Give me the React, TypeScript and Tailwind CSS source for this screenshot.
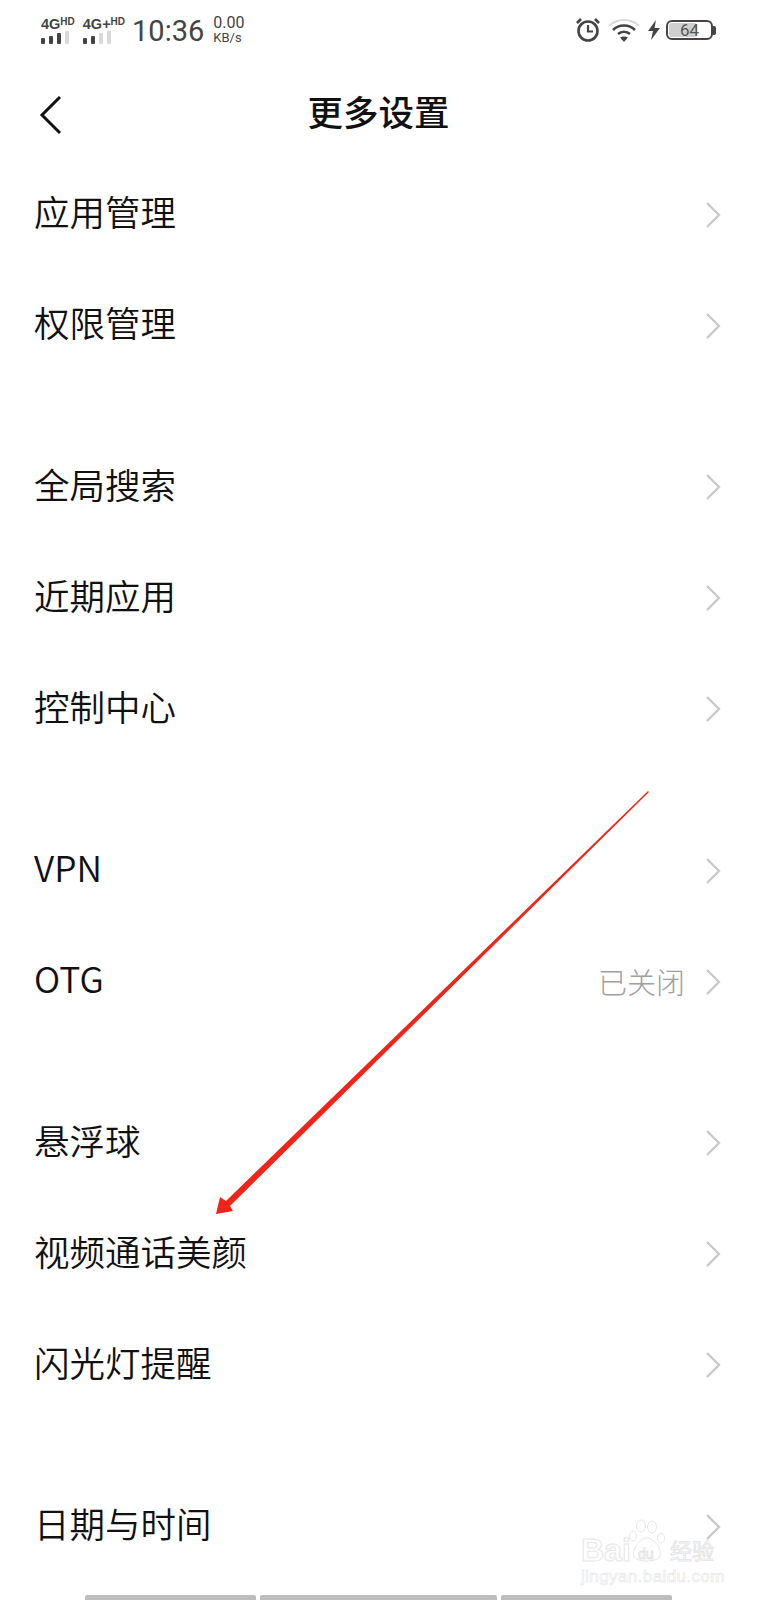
const CJK = 'font-["Noto_Sans_CJK_SC","Noto_Sans",sans-serif]';

type Item = { label: string; value?: string };

const groups: Item[][] = [
  [{ label: '应用管理' }, { label: '权限管理' }],
  [{ label: '全局搜索' }, { label: '近期应用' }, { label: '控制中心' }],
  [{ label: 'VPN' }, { label: 'OTG', value: '已关闭' }],
  [{ label: '悬浮球' }, { label: '视频通话美颜' }, { label: '闪光灯提醒' }],
  [{ label: '日期与时间' }],
];

const Chevron = () => (
  <svg width="16" height="28" viewBox="0 0 16 28" fill="none" className="shrink-0">
    <path d="M2 2l12 12L2 26" stroke="#c9c9c9" strokeWidth="2.4" />
  </svg>
);

const Signal = ({ lit }: { lit: number }) => (
  <div className="flex items-end gap-[4px] h-[13px]">
    {[6, 8, 11, 13].map((h, i) => (
      <div
        key={h}
        className={i < lit ? 'w-[4px] rounded-[1px] bg-[#444444]' : 'w-[4px] rounded-[1px] bg-[#d9d9d9]'}
        style={{ height: h }}
      />
    ))}
  </div>
);

const Network = ({ name, lit }: { name: string; lit: number }) => (
  <div className="flex flex-col gap-[2px]">
    <div className="flex items-start h-[12px] font-['Liberation_Sans',sans-serif] font-bold text-[#444444] leading-none">
      <span className="text-[14.5px]">{name}</span>
      <span className="text-[10px]">HD</span>
    </div>
    <Signal lit={lit} />
  </div>
);

const StatusBar = () => (
  <div className="flex items-center justify-between h-[60px] pl-[41px] pr-[41px] text-[#444444]">
    <div className="flex items-center">
      <div className="flex gap-[8px] pt-[1px]">
        <Network name="4G" lit={3} />
        <Network name="4G+" lit={2} />
      </div>
      <span className="ml-[7px] mt-[2px] text-[29px] leading-none font-['Roboto',sans-serif]">10:36</span>
      <div className="ml-[9px] flex flex-col font-['Roboto',sans-serif]">
        <span className="text-[16px] leading-[15px]">0.00</span>
        <span className="text-[13px] leading-[15px]">KB/s</span>
      </div>
    </div>
    <div className="flex items-center">
      <svg width="26" height="26" viewBox="0 0 26 26" fill="none" stroke="#444444">
        <circle cx="13" cy="14" r="9.5" strokeWidth="2.6" />
        <path d="M13 8v6.5h5" strokeWidth="2.2" />
        <path d="M2 6l4-4M24 6l-4-4" strokeWidth="2.6" />
      </svg>
      <svg width="32" height="24" viewBox="0 0 32 24" fill="none" className="ml-[7px]">
        <path d="M1 8C9 0 23 0 31 8" stroke="#d8d8d8" strokeWidth="2" />
        <path d="M5 12c6-6 16-6 22 0" stroke="#444444" strokeWidth="2.6" />
        <path d="M10 16c3.500-3 8.500-3 12 0" stroke="#444444" strokeWidth="2.6" />
        <path d="M12 19.500c2.500-1.500 5.500-1.500 8 0L16 24z" fill="#444444" />
      </svg>
      <svg width="12" height="20" viewBox="0 0 12 20" className="ml-[8px]">
        <path d="M8 0L0 11h5l-2 9 9-12H6.500z" fill="#444444" />
      </svg>
      <div className="ml-[6px] relative flex items-center justify-center w-[47px] h-[20px] rounded-[6px] border-2 border-[#444444] overflow-hidden">
        <div className="absolute left-[1px] top-[1px] bottom-[1px] w-[28px] rounded-[3px] bg-[#cfcfcf]" />
        <span className="relative text-[17px] leading-none font-['Roboto',sans-serif] text-[#555555]">64</span>
      </div>
      <div className="w-[3px] h-[9px] rounded-r-[2px] bg-[#444444]" />
    </div>
  </div>
);

const Row = ({ label, value }: Item) => (
  <div className="flex items-center justify-between h-[111px] pl-[34px] pr-[36px]">
    <span className="-mt-[7px] text-[35.5px] leading-none font-[350] text-[#111111]">{label}</span>
    <div className="flex items-center gap-[20px]">
      {value && <span className="-mt-[1px] text-[29px] leading-none font-light text-[#a0a0a0]">{value}</span>}
      <Chevron />
    </div>
  </div>
);

export default function App() {
  return (
    <div className={`relative h-[1600px] overflow-hidden bg-white ${CJK}`}>
      <StatusBar />

      <div className="relative flex items-center justify-center h-[99px]">
        <svg width="24" height="40" viewBox="0 0 24 40" fill="none" className="absolute left-[39px] top-[35px]">
          <path d="M21 2L3 20l18 18" stroke="#111111" strokeWidth="3" />
        </svg>
        <h1 className="text-[35.5px] leading-none font-medium text-[#111111] mt-[2px]">更多设置</h1>
      </div>

      <div className="flex flex-col gap-[50.5px]">
        {groups.map((group) => (
          <div key={group[0].label}>
            {group.map((item) => (
              <Row key={item.label} {...item} />
            ))}
          </div>
        ))}
      </div>

      {/* red annotation arrow */}
      <svg width="757" height="1600" viewBox="0 0 757 1600" className="absolute inset-0 pointer-events-none">
        <polygon
          points="648,791 649,792 230,1206 233,1211 216,1214 220,1197 226,1201"
          fill="#f02418"
        />
      </svg>

      {/* watermark */}
      <div className="absolute left-[581px] top-[1518px] w-[140px] h-[66px] pointer-events-none text-transparent [-webkit-text-stroke:1px_#e6e6e6]">
        <span className="absolute left-0 top-[16px] text-[32px] leading-none font-bold font-['Liberation_Sans',sans-serif]">Bai</span>
        <svg width="40" height="44" viewBox="0 0 38 44" fill="none" stroke="#e6e6e6" className="absolute left-[46px] top-0">
          <ellipse cx="13" cy="8" rx="4.500" ry="6" />
          <ellipse cx="24" cy="9" rx="4.500" ry="6" />
          <ellipse cx="5" cy="18" rx="3.500" ry="5" />
          <ellipse cx="33" cy="20" rx="3.500" ry="5" />
          <path d="M19 20c-8 0-17 14-12 20 4 4 20 4 24 0 5-6-4-20-12-20z" />
        </svg>
        <span className="absolute left-[57px] top-[29px] text-[14px] leading-none font-['Liberation_Sans',sans-serif]">du</span>
        <span className="absolute left-[89px] top-[20px] text-[22px] leading-none">经验</span>
        <span className="absolute left-0 top-[50px] text-[17px] leading-none font-['Liberation_Sans',sans-serif] tracking-[0.4px] [-webkit-text-stroke:0.6px_#e6e6e6]">jingyan.baidu.com</span>
      </div>

      {/* bottom bars, cut off by the screenshot */}
      <div className="absolute left-[85px] bottom-0 flex gap-[4px]">
        <div className="w-[171px] h-[5px] rounded-t-[2px] bg-[#bdbdbd]" />
        <div className="w-[237px] h-[5px] rounded-t-[2px] bg-[#bdbdbd]" />
        <div className="w-[171px] h-[5px] rounded-t-[2px] bg-[#bdbdbd]" />
      </div>
    </div>
  );
}
